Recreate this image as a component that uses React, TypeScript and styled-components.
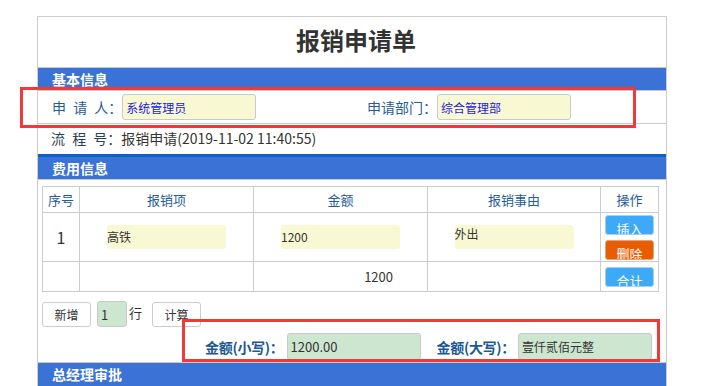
import React from "react";
import styled, { createGlobalStyle } from "styled-components";

const GlobalStyle = createGlobalStyle`
  body {
    margin: 0;
    background: #fff;
    font-family: "Noto Sans CJK SC", "Noto Sans", sans-serif;
  }
`;

const Page = styled.div`
  position: relative;
  height: 386px;
  overflow: hidden;
  padding: 16px 0 0 37px;
  box-sizing: border-box;
`;

const Sheet = styled.div`
  width: 630px;
  box-sizing: border-box;
  border: 1px solid #cccccc;
  border-bottom: none;
`;

const Title = styled.h1`
  margin: 0;
  height: 50px;
  line-height: 46px;
  padding-left: 8px;
  text-align: center;
  font-size: 24px;
  font-weight: bold;
  color: #333;
`;

const SectionBar = styled.div<{ $accent?: boolean }>`
  height: 22px;
  line-height: 22px;
  padding-left: 14px;
  background: #3b72d5;
  color: #fff;
  font-size: 14px;
  font-weight: bold;
  border-top: ${(p) => (p.$accent ? "3px solid #0b63c6" : "1px solid #c8c8c8")};
  border-bottom: 1px solid #c8c8c8;
`;

const FieldRow = styled.div`
  display: grid;
  grid-template-columns: 1fr 1fr;
  height: 32px;
  border-bottom: 1px solid #cccccc;
`;

const Field = styled.div<{ $indent: number }>`
  display: flex;
  align-items: center;
  padding-left: ${(p) => p.$indent}px;
`;

const Label = styled.span`
  font-size: 14px;
  color: #1f5d9c;
  word-spacing: 4px;
  white-space: pre;
`;

const TextBox = styled.input<{ $w: number; $h: number; $tone: "yellow" | "green"; $ink?: string }>`
  width: ${(p) => p.$w}px;
  height: ${(p) => p.$h}px;
  box-sizing: border-box;
  border: 1px solid #c9c9c9;
  border-radius: 3px;
  padding: 0 3px;
  background: ${(p) => (p.$tone === "yellow" ? "#f8f9d3" : "#cde6d0")};
  color: ${(p) => p.$ink || "#333"};
  font-family: inherit;
  font-size: 12px;
  outline: none;
`;

const FlowRow = styled.div`
  height: 30px;
  line-height: 28px;
  padding-left: 13px;
  font-size: 14px;
  color: #333;
  white-space: pre;
`;

const FlowKey = styled.span`
  color: #2c3f55;
  word-spacing: 4px;
`;

const TableWrap = styled.div`
  padding: 6px 0 0 4px;
`;

const Grid = styled.table`
  width: 617px;
  border-collapse: collapse;
  table-layout: fixed;
  td,
  th {
    border: 1px solid #cccccc;
    padding: 0;
    text-align: center;
  }
`;

const HeadCell = styled.th`
  height: 25px;
  font-size: 13px;
  font-weight: normal;
  color: #1f5d9c;
`;

const NumCell = styled.td`
  font-size: 16px;
  color: #333;
`;

const InputCell = styled.td`
  height: 48px;
`;

const CellBox = styled.div<{ $top?: boolean }>`
  width: 119px;
  height: 24px;
  margin: 0 auto;
  border-radius: 3px;
  background: #f8f9d3;
  font-size: 12px;
  color: #333;
  text-align: left;
  line-height: ${(p) => (p.$top ? "18px" : "24px")};
`;

const SumCell = styled.td`
  height: 29px;
  font-size: 13px;
  color: #333;
  && {
    text-align: right;
    padding-right: 34px;
  }
`;

const ActionStack = styled.div`
  display: flex;
  flex-direction: column;
  align-items: center;
  gap: 5px;
`;

const ActionButton = styled.div<{ $danger?: boolean }>`
  width: 49px;
  height: 20px;
  box-sizing: border-box;
  padding-top: 5px;
  line-height: 16px;
  overflow: hidden;
  border-radius: 3px;
  border: 1px solid ${(p) => (p.$danger ? "#d9a487" : "#a7d0ef")};
  background: ${(p) => (p.$danger ? "#e85d00" : "#3ea9f6")};
  color: #fff;
  font-size: 13px;
`;

const ToolRow = styled.div`
  display: flex;
  align-items: center;
  margin: 9px 0 0 4px;
  height: 26px;
`;

const PlainButton = styled.div`
  width: 49px;
  height: 25px;
  box-sizing: border-box;
  border: 1px solid #cccccc;
  border-radius: 3px;
  line-height: 23px;
  text-align: center;
  font-size: 12px;
  color: #333;
`;

const RowCount = styled(TextBox)`
  margin-left: 6px;
  font-size: 13px;
`;

const Unit = styled.span`
  align-self: flex-start;
  margin: 2px 10px 0 2px;
  font-size: 13px;
  color: #333;
`;

const TotalRow = styled.div`
  display: flex;
  justify-content: flex-end;
  align-items: center;
  gap: 3px;
  height: 27px;
  margin-top: 6px;
  padding-right: 14px;
`;

const TotalLabel = styled.span<{ $gap?: number }>`
  font-size: 14px;
  font-weight: bold;
  color: #1d5894;
  letter-spacing: -0.3px;
  margin-left: ${(p) => p.$gap || 0}px;
`;

const BottomBar = styled(SectionBar)`
  margin-top: 2px;
  height: 24px;
`;

const Mark = styled.div<{ $x: number; $y: number; $w: number; $h: number }>`
  position: absolute;
  left: ${(p) => p.$x}px;
  top: ${(p) => p.$y}px;
  width: ${(p) => p.$w}px;
  height: ${(p) => p.$h}px;
  box-sizing: border-box;
  border: 3px solid #f03a3a;
  pointer-events: none;
`;

const items = [{ no: 1, name: "高铁", amount: "1200", reason: "外出" }];

export default function App() {
  return (
    <>
      <GlobalStyle />
      <Page>
        <Sheet>
          <Title>报销申请单</Title>
          <SectionBar>基本信息</SectionBar>
          <FieldRow>
            <Field $indent={14}>
              <Label>申 请 人：</Label>
              <TextBox $w={134} $h={26} $tone="yellow" $ink="#1a1ae0" readOnly defaultValue="系统管理员" />
            </Field>
            <Field $indent={15}>
              <Label>申请部门：</Label>
              <TextBox $w={134} $h={26} $tone="yellow" $ink="#1a1ae0" readOnly defaultValue="综合管理部" />
            </Field>
          </FieldRow>
          <FlowRow>
            <FlowKey>流 程 号：</FlowKey>报销申请(2019-11-02 11:40:55)
          </FlowRow>
          <SectionBar $accent>费用信息</SectionBar>
          <TableWrap>
            <Grid>
              <colgroup>
                <col style={{ width: 37 }} />
                <col style={{ width: 174 }} />
                <col style={{ width: 174 }} />
                <col style={{ width: 173 }} />
                <col style={{ width: 58 }} />
              </colgroup>
              <thead>
                <tr>
                  <HeadCell>序号</HeadCell>
                  <HeadCell>报销项</HeadCell>
                  <HeadCell>金额</HeadCell>
                  <HeadCell>报销事由</HeadCell>
                  <HeadCell>操作</HeadCell>
                </tr>
              </thead>
              <tbody>
                {items.map((it) => (
                  <tr key={it.no}>
                    <NumCell>{it.no}</NumCell>
                    <InputCell>
                      <CellBox>{it.name}</CellBox>
                    </InputCell>
                    <InputCell>
                      <CellBox>{it.amount}</CellBox>
                    </InputCell>
                    <InputCell>
                      <CellBox $top>{it.reason}</CellBox>
                    </InputCell>
                    <InputCell>
                      <ActionStack>
                        <ActionButton>插入</ActionButton>
                        <ActionButton $danger>删除</ActionButton>
                      </ActionStack>
                    </InputCell>
                  </tr>
                ))}
                <tr>
                  <td />
                  <td />
                  <SumCell>1200</SumCell>
                  <td />
                  <td>
                    <ActionStack>
                      <ActionButton>合计</ActionButton>
                    </ActionStack>
                  </td>
                </tr>
              </tbody>
            </Grid>
          </TableWrap>
          <ToolRow>
            <PlainButton>新增</PlainButton>
            <RowCount $w={30} $h={26} $tone="green" readOnly defaultValue="1" />
            <Unit>行</Unit>
            <PlainButton>计算</PlainButton>
          </ToolRow>
          <TotalRow>
            <TotalLabel>金额(小写)：</TotalLabel>
            <TextBox $w={134} $h={27} $tone="green" readOnly defaultValue="1200.00" style={{ fontSize: 13 }} />
            <TotalLabel $gap={13}>金额(大写)：</TotalLabel>
            <TextBox $w={134} $h={27} $tone="green" readOnly defaultValue="壹仟贰佰元整" />
          </TotalRow>
          <BottomBar>总经理审批</BottomBar>
        </Sheet>
        <Mark $x={20} $y={87} $w={616} $h={41} />
        <Mark $x={182} $y={319} $w={478} $h={43} />
      </Page>
    </>
  );
}
